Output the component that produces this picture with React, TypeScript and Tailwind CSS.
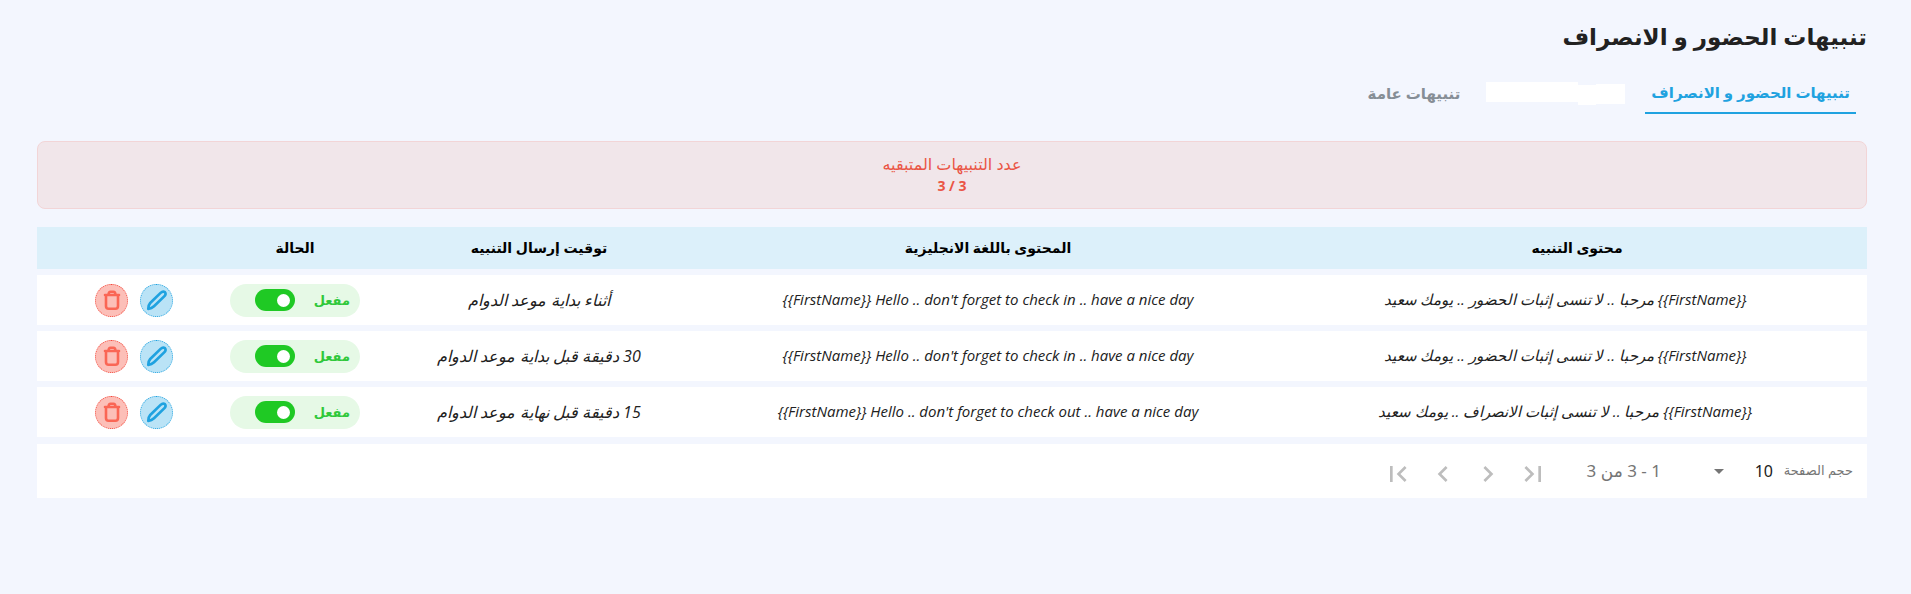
import { useState } from "react";
import {
  MdArrowDropDown,
  MdChevronLeft,
  MdChevronRight,
  MdFirstPage,
  MdLastPage,
} from "react-icons/md";

const alerts = [
  {
    id: 1,
    content: "{{FirstName}} مرحبا .. لا تنسى إثبات الحضور .. يومك سعيد",
    contentEn: "{{FirstName}} Hello .. don't forget to check in .. have a nice day",
    timing: "أثناء بداية موعد الدوام",
  },
  {
    id: 2,
    content: "{{FirstName}} مرحبا .. لا تنسى إثبات الحضور .. يومك سعيد",
    contentEn: "{{FirstName}} Hello .. don't forget to check in .. have a nice day",
    timing: "30 دقيقة قبل بداية موعد الدوام",
  },
  {
    id: 3,
    content: "{{FirstName}} مرحبا .. لا تنسى إثبات الانصراف .. يومك سعيد",
    contentEn: "{{FirstName}} Hello .. don't forget to check out .. have a nice day",
    timing: "15 دقيقة قبل نهاية موعد الدوام",
  },
];

const PencilIcon = () => (
  <svg width="22" height="22" viewBox="0 0 22 22" fill="none" stroke="currentColor" strokeWidth="2.7" strokeLinejoin="round">
    <path d="M2.3 19.8C2.3 17.5 2.8 15.500 4.200 14L14.6 3.900C16.2 2.400 17.700 2.300 18.900 3.200C20 4.300 19.700 5.900 18.200 7.400L8 17.200C6.500 18.600 4.800 19.500 2.300 19.800Z" />
  </svg>
);

const TrashIcon = () => (
  <svg width="22" height="22" viewBox="0 0 22 22" fill="none" stroke="currentColor" strokeWidth="2.6" strokeLinecap="round">
    <path d="M4 6h14M7.500 5.500C7.700 3.300 8.300 2.700 9.500 2.700h3c1.200 0 1.800.6 2 2.800M5 6.500V17c0 2 .8 2.800 2.600 2.800h6.800c1.800 0 2.600-.8 2.600-2.800V6.500" />
  </svg>
);

const StatusSwitch = ({ id }: { id: number }) => {
  const [enabled, setEnabled] = useState(true);

  return (
    <label
      htmlFor={`status-${id}`}
      className="mx-auto flex h-[33px] w-[130px] items-center justify-between rounded-full bg-[#e6f9e6] ps-2.5 pe-[25px] text-[13px] font-bold text-[#2fc83a]"
    >
      مفعل
      <input
        id={`status-${id}`}
        type="checkbox"
        checked={enabled}
        onChange={(e) => setEnabled(e.target.checked)}
        className="flex h-[22px] w-10 appearance-none items-center rounded-full bg-gray-400 px-[5px] before:size-[13px] before:rounded-full before:bg-white checked:bg-[#1fc924]"
      />
    </label>
  );
};

const Pagination = () => (
  <div className="mt-px flex h-[54px] items-center bg-white ps-3.5 font-['Noto_Sans','DejaVu_Sans',sans-serif] text-[#757575]">
    <label htmlFor="page-size" className="w-[70px] text-[13px] whitespace-nowrap">
      حجم الصفحة
    </label>
    <div className="relative ms-2 flex items-center">
      <select id="page-size" className="w-[68px] appearance-none ps-0.5 text-base text-[#212121]">
        <option>10</option>
        <option>25</option>
      </select>
      <MdArrowDropDown className="pointer-events-none absolute end-0 size-6" />
    </div>
    <span className="ms-[46px] text-[17px] whitespace-nowrap">1 - 3 من 3</span>
    <div className="ms-[38px] flex gap-[13px] pt-1.5 text-[#bdbdbd]">
      <button aria-label="الصفحة الأخيرة">
        <MdLastPage className="size-8" />
      </button>
      <button aria-label="التالي">
        <MdChevronRight className="size-8" />
      </button>
      <button aria-label="السابق">
        <MdChevronLeft className="size-8" />
      </button>
      <button aria-label="الصفحة الأولى">
        <MdFirstPage className="size-8" />
      </button>
    </div>
  </div>
);

const App = () => {
  return (
    <div
      dir="rtl"
      className="min-h-screen bg-[#f3f6fe] ps-11 pe-[37px] pt-4 font-['Open_Sans','DejaVu_Sans',sans-serif] text-[#212121]"
    >
      <h1 className="text-[23px] leading-10 font-semibold">تنبيهات الحضور و الانصراف</h1>

      <nav className="mt-4 flex ps-[11px] text-[15px] font-semibold">
        <button className="h-[42px] border-b-2 border-[#1fa2e0] px-1.5 text-[#1fa2e0]">
          تنبيهات الحضور و الانصراف
        </button>
        <button aria-label="تنبيهات" className="ms-5 me-6 flex h-[42px] pt-2.5">
          <span className="mt-0.5 h-5 w-[29px] bg-white" />
          <span className="mt-[3px] h-5 w-[18px] bg-white" />
          <span className="h-5 w-[92px] bg-white" />
        </button>
        <button className="h-[42px] px-0.5 text-[#868e96]">تنبيهات عامة</button>
      </nav>

      <section className="mt-[27px] flex h-[68px] flex-col items-center rounded-lg border border-[#f2d5d7] bg-[#f1e6ea] pt-[11px] text-[#ea5545]">
        <p className="text-base leading-[22px]">عدد التنبيهات المتبقيه</p>
        <p className="text-sm leading-[22px] font-bold">3 / 3</p>
      </section>

      <table className="mt-3 w-full table-fixed border-separate border-spacing-x-0 border-spacing-y-1.5 text-center text-sm">
        <thead>
          <tr className="h-[42px] bg-[#dcf0fa] text-black">
            <th className="w-[580px]">محتوى التنبيه</th>
            <th>المحتوى باللغة الانجليزية</th>
            <th className="w-[300px]">توقيت إرسال التنبيه</th>
            <th className="w-[188px]">الحالة</th>
            <th className="w-[164px]" />
          </tr>
        </thead>
        <tbody>
          {alerts.map((alert) => (
            <tr key={alert.id} className="h-[50px] bg-white">
              <td className="ps-6 text-[15px] italic">{alert.content}</td>
              <td dir="ltr" className="text-[15px] italic">{alert.contentEn}</td>
              <td className="text-base italic">{alert.timing}</td>
              <td>
                <StatusSwitch id={alert.id} />
              </td>
              <td>
                <div className="flex gap-3 ps-7">
                  <button
                    aria-label="تعديل"
                    className="flex size-[33px] items-center justify-center rounded-full border border-dotted border-[#1fa2e0] bg-[#bae3f6] text-[#1fa2e0]"
                  >
                    <PencilIcon />
                  </button>
                  <button
                    aria-label="حذف"
                    className="flex size-[33px] items-center justify-center rounded-full border border-dotted border-[#f4473a] bg-[#fcbfb8] text-[#fa6655]"
                  >
                    <TrashIcon />
                  </button>
                </div>
              </td>
            </tr>
          ))}
        </tbody>
      </table>
      <Pagination />
    </div>
  );
};

export default App;
